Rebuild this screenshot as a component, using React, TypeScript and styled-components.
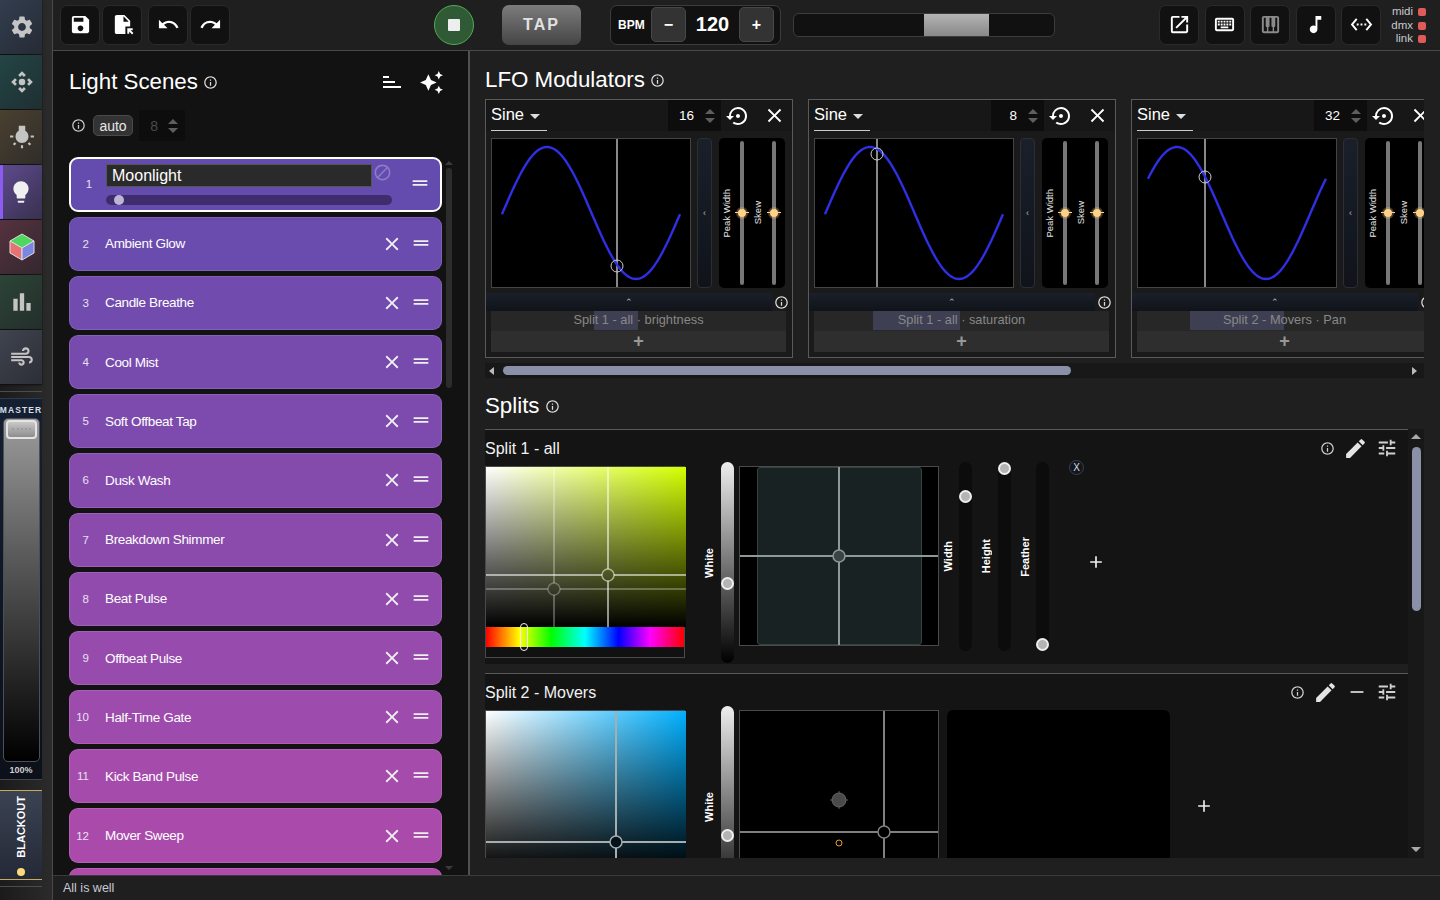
import React from "react";
import styled, { createGlobalStyle } from "styled-components";
import {
  MdAdd,
  MdAir,
  MdAutoAwesome,
  MdBarChart,
  MdBlock,
  MdClose,
  MdControlCamera,
  MdDragHandle,
  MdEdit,
  MdInfoOutline,
  MdLightbulb,
  MdMusicNote,
  MdOpenInNew,
  MdOutlineKeyboard,
  MdOutlineSettingsEthernet,
  MdPiano,
  MdRedo,
  MdRemove,
  MdSave,
  MdSettings,
  MdSettingsBackupRestore,
  MdSort,
  MdTune,
  MdUndo,
  MdWbIncandescent,
  MdFileOpen,
} from "react-icons/md";

const GlobalStyle = createGlobalStyle`
    html, body {
        margin: 0;
        height: 100%;
        overflow: hidden;
        background: #1f1f1f;
    }
    * {
        box-sizing: border-box;
    }
    body {
        font-family: "Liberation Sans", Arial, sans-serif;
        color: #fff;
    }
`;

const Shell = styled.div`
  display: flex;
  width: 1440px;
  height: 900px;
  overflow: hidden;
`;

/* ---------- left rail ---------- */

const Sidebar = styled.div`
  display: flex;
  flex: 0 0 53px;
  border-right: 1px solid #4a4a4a;
  background: linear-gradient(to right, #1b1b1b, #2b2b2b);
`;

const Rail = styled.div`
  display: flex;
  flex-direction: column;
  width: 42px;
`;

const Tab = styled.div<{ $bg: string; $active?: boolean }>`
  display: flex;
  align-items: center;
  justify-content: center;
  height: 54px;
  margin-bottom: 1px;
  padding-left: ${(p) => (p.$active ? "0" : "2px")};
  color: #c4c4c4;
  font-size: 26px;
  background: linear-gradient(135deg, ${(p) => p.$bg}, #1d1f24 170%);
  border-left: ${(p) => (p.$active ? "3px solid #8c5cf0" : "0")};
  box-shadow: 0 1px 2px rgba(0, 0, 0, 0.6);
  svg {
    margin-right: ${(p) => (p.$active ? "4px" : "0")};
  }
`;

const RailRule = styled.div`
  height: 1px;
  margin-top: 6px;
  background: #4c4c4c;
`;

const MasterPanel = styled.div`
  display: flex;
  flex-direction: column;
  align-items: center;
  height: 382px;
  margin-top: 6px;
  border-top: 1px solid #2c3a4a;
  border-bottom: 1px solid #445;
  background: linear-gradient(to bottom, #142032, #0c1019);
`;

const MasterLabel = styled.div`
  height: 19px;
  padding-top: 6px;
  font-size: 8.5px;
  font-weight: 700;
  letter-spacing: 1.1px;
  color: #d8dce2;
`;

const Fader = styled.div`
  position: relative;
  width: 37px;
  height: 344px;
  border: 1px solid #4a4f58;
  border-radius: 5px;
  background: linear-gradient(to bottom, #9c9c9c, #5a5a5a 40%, #000);
`;

const FaderThumb = styled.div`
  position: absolute;
  top: 1px;
  left: 2px;
  width: 31px;
  height: 19px;
  border: 2px solid #e4e4e4;
  border-radius: 4px;
  background: linear-gradient(to bottom, #c8c8c8, #8e8e8e);
  &::after {
    content: "";
    position: absolute;
    top: 6px;
    left: 4px;
    right: 4px;
    border-top: 2px dotted #9a9a9a;
  }
`;

const Percent = styled.div`
  margin-top: 3px;
  font-size: 9px;
  font-weight: 700;
  color: #cfcfcf;
`;

const BlackoutPanel = styled.div`
  display: flex;
  flex-direction: column;
  align-items: center;
  height: 90px;
  margin-top: 10px;
  padding-top: 5px;
  border-top: 1px solid #c9a860;
  border-bottom: 1px solid #c9a860;
  background: linear-gradient(to bottom, #3b4252, #232936);
`;

const BlackoutText = styled.div`
  writing-mode: vertical-rl;
  transform: rotate(180deg);
  font-size: 11px;
  font-weight: 700;
  color: #fff;
`;

const Lamp = styled.div`
  width: 8px;
  height: 8px;
  margin-top: 10px;
  border-radius: 50%;
  background: #ffd97a;
`;

const RailFoot = styled.div`
  height: 1px;
  margin-top: 6px;
  background: #4c4c4c;
`;

/* ---------- top bar ---------- */

const Main = styled.div`
  display: flex;
  flex: 1;
  flex-direction: column;
  min-width: 0;
`;

const TopBar = styled.div`
  display: flex;
  flex: 0 0 51px;
  align-items: center;
  padding: 0 0 1px 7px;
  border-bottom: 1px solid #4a4a4a;
  background: #1f1f1f;
`;

const ToolButton = styled.div<{ $left?: number; $dim?: boolean }>`
  display: flex;
  flex: 0 0 40px;
  align-items: center;
  justify-content: center;
  height: 40px;
  margin-left: ${(p) => p.$left ?? 0}px;
  border: 1px solid #2a2a2a;
  border-radius: 7px;
  background: #111;
  color: ${(p) => (p.$dim ? "#8a8a8a" : "#fff")};
  font-size: 23px;
`;

const StopButton = styled.div`
  display: flex;
  flex: 0 0 40px;
  align-items: center;
  justify-content: center;
  height: 40px;
  margin-left: 204px;
  border: 1.5px solid #4caf50;
  border-radius: 50%;
  background: #2f5a35;
  &::after {
    content: "";
    width: 12px;
    height: 12px;
    border-radius: 1px;
    background: #eee;
  }
`;

const TapButton = styled.div`
  display: flex;
  flex: 0 0 79px;
  align-items: center;
  justify-content: center;
  height: 40px;
  margin-left: 28px;
  border-radius: 7px;
  background: linear-gradient(to bottom, #7c7c7c, #454545);
  font-size: 16px;
  font-weight: 700;
  letter-spacing: 2px;
  color: #e2e2e2;
`;

const BpmBox = styled.div`
  display: flex;
  flex: 0 0 171px;
  align-items: center;
  height: 40px;
  margin-left: 29px;
  padding-left: 7px;
  border: 1px solid #3c3c3c;
  border-radius: 7px;
  background: #111;
`;

const BpmLabel = styled.div`
  width: 33px;
  font-size: 12px;
  font-weight: 700;
`;

const BpmStep = styled.div`
  display: flex;
  flex: 0 0 35px;
  align-items: center;
  justify-content: center;
  height: 35px;
  border: 1px solid #474747;
  border-radius: 5px;
  background: #333;
  font-size: 16px;
  font-weight: 700;
`;

const BpmValue = styled.div`
  flex: 0 0 53px;
  text-align: center;
  font-size: 20px;
  font-weight: 700;
`;

const BeatBar = styled.div`
  display: flex;
  flex: 0 0 262px;
  height: 24px;
  margin-left: 12px;
  padding-left: 130px;
  overflow: hidden;
  border: 1px solid #3c3c3c;
  border-radius: 6px;
  background: #111;
`;

const BeatFill = styled.div`
  width: 65px;
  background: linear-gradient(to bottom, #b4b4b4, #888);
`;

const ToolGroup = styled.div`
  display: flex;
  gap: 5.5px;
  margin-left: 104px;
`;

const Signals = styled.div`
  display: grid;
  grid-template-columns: 32px 8px;
  column-gap: 5px;
  align-items: center;
  justify-items: end;
  margin-top: 2px;
  font-size: 11.5px;
  line-height: 13.5px;
  color: #c8c8d0;
`;

const SignalDot = styled.div`
  width: 8px;
  height: 8px;
  border-radius: 2px;
  background: #e05a5a;
`;

/* ---------- body ---------- */

const Body = styled.div`
  display: flex;
  flex: 1;
  min-height: 0;
`;

const ScenesPanel = styled.div`
  display: flex;
  flex: 0 0 417px;
  flex-direction: column;
  padding-left: 16px;
  border-right: 2px solid #505050;
  background: #121212;
`;

const PanelHead = styled.div`
  display: flex;
  align-items: center;
  height: 30px;
  margin-top: 16px;
`;

const PanelTitle = styled.div`
  font-size: 22.3px;
  color: #fff;
`;

const TitleInfo = styled(MdInfoOutline)`
  margin-left: 5px;
  font-size: 15px;
  color: #ddd;
`;

const SortIcon = styled(MdSort)`
  margin-left: 162px;
  font-size: 24px;
  transform: scaleY(-1);
`;

const SparkIcon = styled(MdAutoAwesome)`
  margin-left: 15px;
  font-size: 25px;
`;

const AutoRow = styled.div`
  display: flex;
  align-items: center;
  height: 31px;
  margin-top: 13px;
  padding-left: 2px;
`;

const AutoChip = styled.div`
  display: flex;
  align-items: center;
  justify-content: center;
  width: 40px;
  height: 21px;
  margin-left: 7px;
  border: 1px solid #4a4a4a;
  border-radius: 5px;
  background: #333;
  font-size: 14px;
  color: #e8e8e8;
`;

const AutoInfo = styled(MdInfoOutline)`
  font-size: 15px;
  color: #ccc;
`;

const Stepper = styled.div<{ $width: number; $left?: number; $muted?: boolean }>`
  display: flex;
  align-items: center;
  justify-content: flex-end;
  gap: 10px;
  flex: 0 0 ${(p) => p.$width}px;
  height: 31px;
  margin-left: ${(p) => p.$left ?? 0}px;
  padding-right: 7px;
  background: #0d0d0d;
  font-size: 14px;
  color: ${(p) => (p.$muted ? "#4a4a4a" : "#fff")};
`;

const Arrows = styled.div`
  display: flex;
  flex-direction: column;
  gap: 4px;
`;

const Caret = styled.div<{ $up?: boolean }>`
  width: 0;
  height: 0;
  border-left: 5px solid transparent;
  border-right: 5px solid transparent;
  border-top: ${(p) => (p.$up ? "0" : "5px solid #5e5e5e")};
  border-bottom: ${(p) => (p.$up ? "5px solid #5e5e5e" : "0")};
`;

const ListWrap = styled.div`
  display: flex;
  flex: 1;
  min-height: 0;
  margin-top: 16px;
`;

const SceneList = styled.div`
  display: flex;
  flex: 0 0 373px;
  flex-direction: column;
  gap: 5px;
  overflow: hidden;
`;

const SceneRow = styled.div<{ $bg: string }>`
  display: flex;
  flex: 0 0 54.2px;
  align-items: center;
  border: 1px solid rgba(255, 255, 255, 0.12);
  border-radius: 9px;
  background: ${(p) => p.$bg};
`;

const ActiveScene = styled.div`
  display: flex;
  flex: 0 0 54.6px;
  border: 2px solid #fff;
  border-radius: 9px;
  background: #644bae;
`;

const SceneNo = styled.div`
  flex: 0 0 35px;
  padding-right: 16px;
  text-align: right;
  font-size: 11.5px;
  color: #e6e0f2;
`;

const ActiveNo = styled.div`
  flex: 0 0 35px;
  align-self: center;
  padding-left: 1px;
  text-align: center;
  font-size: 11.5px;
  color: #e6e0f2;
`;

const SceneName = styled.div`
  flex: 1;
  font-size: 13.5px;
  letter-spacing: -0.35px;
  color: #fff;
`;

const CloseX = styled(MdClose)`
  margin-right: 7px;
  font-size: 22px;
  color: #f0f0f0;
`;

const Handle = styled(MdDragHandle)`
  margin: 0 9px 2px 0;
  font-size: 22px;
  color: #f0f0f0;
`;

const ActiveBody = styled.div`
  display: flex;
  flex-direction: column;
  width: 286px;
  margin-top: 5px;
`;

const NameInput = styled.div`
  display: flex;
  align-items: center;
  width: 266px;
  height: 23px;
  padding-left: 5px;
  border: 1px solid #555;
  background: #2a2a2a;
  font-size: 16px;
  color: #fff;
`;

const SceneTrack = styled.div`
  position: relative;
  height: 10px;
  margin-top: 8px;
  border-radius: 5px;
  background: #3d2d6c;
  &::after {
    content: "";
    position: absolute;
    top: 0;
    left: 8px;
    width: 10px;
    height: 10px;
    border-radius: 50%;
    background: #bdb5d8;
  }
`;

const BlockIcon = styled(MdBlock)`
  position: absolute;
  top: 4px;
  left: 267px;
  font-size: 19px;
  color: #8d7cc9;
`;

const ActiveMiddle = styled.div`
  position: relative;
  display: flex;
  flex: 0 0 286px;
`;

const ActiveHandle = styled(MdDragHandle)`
  align-self: center;
  margin: 0 0 2px 17px;
  font-size: 22px;
  color: #f0f0f0;
`;

const ListScroll = styled.div`
  display: flex;
  flex: 0 0 8px;
  flex-direction: column;
  align-items: center;
  justify-content: space-between;
  margin-left: 3px;
  padding: 4px 0 5px;
`;

const ListThumb = styled.div`
  width: 6px;
  height: 220px;
  margin-top: 3px;
  margin-bottom: auto;
  border-radius: 3px;
  background: #2c2c2c;
`;

const TinyCaret = styled.div<{ $up?: boolean }>`
  width: 0;
  height: 0;
  border-left: 4px solid transparent;
  border-right: 4px solid transparent;
  border-top: ${(p) => (p.$up ? "0" : "4px solid #3a3a3a")};
  border-bottom: ${(p) => (p.$up ? "4px solid #3a3a3a" : "0")};
`;

/* ---------- right side ---------- */

const RightPanel = styled.div`
  display: flex;
  flex: 1;
  flex-direction: column;
  min-width: 0;
  padding-left: 15px;
  background: #1f1f1f;
`;

const RightTitle = styled.div`
  display: flex;
  align-items: center;
  height: 28px;
`;

const LfoTitle = styled(RightTitle)`
  margin-top: 15px;
  margin-bottom: 5px;
`;

const SplitsTitle = styled(RightTitle)`
  margin-top: 14px;
  margin-bottom: 9px;
`;

const LfoStrip = styled.div`
  display: flex;
  gap: 15px;
  width: 939px;
  overflow: hidden;
`;

const LfoCard = styled.div`
  display: flex;
  flex: 0 0 308px;
  flex-direction: column;
  height: 259px;
  border: 1px solid #5a5a5a;
  background: #1a1a1a;
`;

const LfoHead = styled.div`
  display: flex;
  align-items: center;
  height: 31px;
  padding: 0 6px 0 5px;
  background: #171717;
`;

const WaveSelect = styled.div`
  display: flex;
  align-items: center;
  gap: 6px;
  width: 56px;
  height: 31px;
  padding-bottom: 1px;
  border-bottom: 1px solid #ccc;
  font-size: 16.5px;
  &::after {
    content: "";
    margin-top: 4px;
    border-left: 5px solid transparent;
    border-right: 5px solid transparent;
    border-top: 5px solid #ddd;
  }
`;

const LfoStepper = styled(Stepper)`
  margin-left: auto;
  padding-right: 6px;
  color: #fff;
  font-size: 13.5px;
  gap: 11px;
`;

const RestoreIcon = styled(MdSettingsBackupRestore)`
  margin-left: 5px;
  font-size: 24px;
`;

const LfoClose = styled(MdClose)`
  margin-left: 13px;
  font-size: 23px;
`;

const LfoBody = styled.div`
  display: flex;
  height: 150px;
  margin-top: 7px;
  padding-left: 5px;
`;

const WaveCanvas = styled.svg`
  flex: 0 0 200px;
  height: 150px;
  border: 1px solid #444;
  background: #000;
`;

const SideHandle = styled.div`
  display: flex;
  flex: 0 0 15px;
  align-items: center;
  justify-content: center;
  margin-left: 6px;
  border: 1px solid #2a2e36;
  border-radius: 4px;
  background: linear-gradient(to bottom, #1a1f2a, #10131a);
  font-size: 9px;
  color: #bbb;
`;

const ParamPanel = styled.div`
  display: grid;
  flex: 0 0 66px;
  grid-template-columns: 16px 14px 18px 14px;
  margin-left: 7px;
  padding: 3px 0;
  border-radius: 5px;
  background: #000;
`;

const ParamLabel = styled.div`
  display: flex;
  align-items: center;
  justify-content: center;
  padding-right: 2px;
  font-size: 9.5px;
  color: #e4e4e4;
  span {
    writing-mode: vertical-rl;
    transform: rotate(180deg);
    white-space: nowrap;
  }
`;

const ParamTrack = styled.div`
  position: relative;
  justify-self: center;
  width: 4px;
  border-radius: 2px;
  background: #777;
  &::before {
    content: "";
    position: absolute;
    top: 71px;
    left: -5px;
    width: 14px;
    height: 1px;
    background: #ffd288;
  }
  &::after {
    content: "";
    position: absolute;
    top: 68px;
    left: -2px;
    width: 8px;
    height: 8px;
    border-radius: 50%;
    background: #ffd288;
    box-shadow: 0 0 0 2px rgba(255, 210, 136, 0.28);
  }
`;

const CollapseRow = styled.div`
  display: flex;
  align-items: center;
  height: 18px;
  margin-top: 5px;
`;

const CollapseBar = styled.div`
  display: flex;
  flex: 0 0 286px;
  align-items: center;
  justify-content: center;
  height: 18px;
  background: linear-gradient(to bottom, #1a1f2a, #101319);
  font-size: 9px;
  color: #bbb;
`;

const CollapseInfo = styled(MdInfoOutline)`
  margin-left: 2px;
  font-size: 15px;
  color: #ddd;
`;

const TargetRow = styled.div`
  position: relative;
  height: 20px;
  margin: 0 6px 0 5px;
  background: #272727;
  text-align: center;
  font-size: 12.8px;
  line-height: 17px;
  color: #888;
  white-space: nowrap;
`;

const TargetMark = styled.div<{ $left: number; $width: number }>`
  position: absolute;
  top: 0;
  left: ${(p) => p.$left}px;
  width: ${(p) => p.$width}px;
  height: 19px;
  background: rgba(110, 110, 170, 0.35);
`;

const TargetText = styled.span`
  position: relative;
`;

const AddRow = styled.div`
  height: 21px;
  margin: 0 6px 5px 5px;
  background: #2e2e2e;
  text-align: center;
  color: #999;
  font-size: 18px;
  font-weight: 700;
  line-height: 21px;
`;

const HScroll = styled.div`
  display: flex;
  align-items: center;
  justify-content: space-between;
  width: 939px;
  height: 15px;
  margin-top: 5px;
  padding: 0 7px 0 4px;
  background: #181818;
`;

const HThumb = styled.div`
  width: 568px;
  height: 9px;
  margin-left: 9px;
  margin-right: auto;
  border-radius: 5px;
  background: #8a90a8;
`;

const SideCaret = styled.div<{ $left?: boolean }>`
  width: 0;
  height: 0;
  border-top: 4px solid transparent;
  border-bottom: 4px solid transparent;
  border-right: ${(p) => (p.$left ? "5px solid #bbb" : "0")};
  border-left: ${(p) => (p.$left ? "0" : "5px solid #bbb")};
`;

const SplitsFrame = styled.div`
  display: flex;
  width: 939px;
  height: 429px;
  overflow: hidden;
`;

const SplitsColumn = styled.div`
  display: flex;
  flex: 0 0 923px;
  flex-direction: column;
  overflow: hidden;
`;

const SplitSection = styled.div<{ $height: number }>`
  flex: 0 0 ${(p) => p.$height}px;
  border-top: 1px solid #5a5a5a;
  background: #141414;
`;

const SplitGap = styled.div`
  flex: 0 0 9px;
  background: #1f1f1f;
`;

const SplitHead = styled.div`
  display: flex;
  align-items: center;
  height: 36px;
  padding-right: 6px;
  font-size: 16px;
  color: #f2f2f2;
`;

const SplitName = styled.div`
  margin-right: auto;
  padding-top: 1px;
`;

const HeadSlot = styled.div`
  display: flex;
  flex: 0 0 30px;
  align-items: center;
  justify-content: center;
  color: #d0d0d0;
  font-size: 22px;
`;

const SmallInfo = styled(MdInfoOutline)`
  font-size: 15px;
`;

const Pencil = styled(MdEdit)`
  margin-right: 4px;
  font-size: 25px;
  color: #e4e4e4;
`;

const Controls = styled.div`
  display: flex;
  align-items: flex-start;
`;

const Picker = styled.div`
  position: relative;
  flex: 0 0 200px;
  min-width: 0;
  height: 192px;
  border: 1px solid #4a4a4a;
  background: #111;
`;

const SvField = styled.div<{ $hue: string }>`
  position: relative;
  width: 200px;
  height: 160px;
  background: linear-gradient(to top, #000, transparent),
    linear-gradient(to right, #fff, ${(p) => p.$hue});
`;

const Overlay = styled.svg`
  position: absolute;
  top: 0;
  left: 0;
  width: 100%;
  height: 100%;
`;

const HueStrip = styled.div`
  position: relative;
  width: 198px;
  height: 20px;
  background: linear-gradient(
    to right,
    #f00 0%,
    #ff0 17%,
    #0f0 33%,
    #0ff 50%,
    #00f 67%,
    #f0f 83%,
    #f00 100%
  );
`;

const HueThumb = styled.div`
  position: absolute;
  top: -4px;
  left: 34px;
  width: 8px;
  height: 28px;
  border: 1px solid #eee;
  border-radius: 4px;
`;

const SliderGroup = styled.div<{ $left: number; $height: number; $gap: number }>`
  display: flex;
  align-items: center;
  gap: ${(p) => p.$gap}px;
  height: ${(p) => p.$height}px;
  margin-top: -4px;
  margin-left: ${(p) => p.$left}px;
`;

const VLabel = styled.div`
  flex: 0 0 12px;
  writing-mode: vertical-rl;
  transform: rotate(180deg);
  text-align: center;
  font-size: 11px;
  font-weight: 700;
  line-height: 12px;
  white-space: nowrap;
  color: #fff;
`;

const WhiteTrack = styled.div`
  position: relative;
  flex: 0 0 13px;
  height: 100%;
  border-radius: 7px;
  background: linear-gradient(to bottom, #eee, #000);
`;

const DarkTrack = styled.div`
  position: relative;
  flex: 0 0 13px;
  height: 100%;
  border-radius: 7px;
  background: #0c0c0c;
`;

const Knob = styled.div<{ $top: number }>`
  position: absolute;
  top: ${(p) => p.$top}px;
  left: 0;
  width: 13px;
  height: 13px;
  border: 2px solid #eee;
  border-radius: 50%;
  background: #b4b4b4;
`;

const XyPad = styled.div<{ $left: number }>`
  position: relative;
  flex: 0 0 200px;
  height: 180px;
  margin-left: ${(p) => p.$left}px;
  border: 1px solid #4a4a4a;
  background: #000;
`;

const XyZone = styled.div`
  position: absolute;
  top: 0;
  left: 17px;
  width: 165px;
  height: 178px;
  border: 1px solid #34423f;
  border-radius: 3px;
  background: #182222;
`;

const RemoveDot = styled.div`
  display: flex;
  flex: 0 0 15px;
  align-items: center;
  justify-content: center;
  height: 15px;
  margin: -6px 0 0 20px;
  border: 1px solid #39404c;
  border-radius: 50%;
  background: #12161e;
  font-size: 10px;
  color: #ddd;
`;

const PlusIcon = styled(MdAdd)<{ $left: number; $top: number }>`
  flex: 0 0 20px;
  margin-top: ${(p) => p.$top}px;
  margin-left: ${(p) => p.$left}px;
  font-size: 20px;
  color: #eee;
`;

const BlackPanel = styled.div`
  flex: 0 0 223px;
  height: 180px;
  margin-left: 8px;
  border-radius: 6px;
  background: #000;
`;

const VScroll = styled.div`
  display: flex;
  flex: 0 0 16px;
  flex-direction: column;
  align-items: center;
  padding: 5px 0 6px;
  background: #181818;
`;

const VThumb = styled.div`
  width: 9px;
  height: 164px;
  margin-top: 8px;
  margin-bottom: auto;
  border-radius: 5px;
  background: #8a90a8;
`;

const VCaret = styled.div<{ $up?: boolean }>`
  width: 0;
  height: 0;
  border-left: 5px solid transparent;
  border-right: 5px solid transparent;
  border-top: ${(p) => (p.$up ? "0" : "5px solid #aaa")};
  border-bottom: ${(p) => (p.$up ? "5px solid #aaa" : "0")};
`;

const StatusBar = styled.div`
  display: flex;
  flex: 0 0 25px;
  align-items: center;
  padding-left: 10px;
  border-top: 1px solid #3a3a3a;
  background: #1f1f1f;
  font-size: 12.5px;
  color: #c9c9d6;
`;

/* ---------- drawings ---------- */

const CubeIcon = () => (
  <svg width="26" height="28" viewBox="0 0 26 28">
    <polygon points="13,1 25,8 13,15 1,8" fill="#4fd65e" stroke="#ddd" strokeWidth="1" />
    <polygon points="1,8 13,15 13,27 1,20" fill="#e57373" stroke="#ddd" strokeWidth="1" />
    <polygon points="25,8 13,15 13,27 25,20" fill="#7a86e0" stroke="#ddd" strokeWidth="1" />
  </svg>
);

const wavePath = (peak: number): string => {
  const pts: string[] = [];
  for (let x = 10; x <= 188; x += 2) {
    const y = 74 - 66 * Math.cos(((x - peak) / 178) * 2 * Math.PI);
    pts.push(`${x},${y.toFixed(1)}`);
  }
  return "M" + pts.join("L");
};

interface WaveProps {
  peak: number;
  headX: number;
  headY: number;
}

const Wave = ({ peak, headX, headY }: WaveProps) => (
  <WaveCanvas viewBox="0 0 198 148">
    <line x1={headX} y1="0" x2={headX} y2="148" stroke="#888" strokeWidth="2" />
    <path d={wavePath(peak)} fill="none" stroke="#2f2fe6" strokeWidth="2.4" />
    <circle cx={headX} cy={headY} r="6" fill="none" stroke="#ccc" strokeWidth="1" />
  </WaveCanvas>
);

interface CrossProps {
  x: number;
  y: number;
  color: string;
  fill?: string;
}

const Cross = ({ x, y, color, fill = "none" }: CrossProps) => (
  <Overlay>
    <line x1={x} y1="0" x2={x} y2={y - 6} stroke={color} strokeWidth="2" />
    <line x1={x} y1={y + 6} x2={x} y2="1000" stroke={color} strokeWidth="2" />
    <line x1="0" y1={y} x2={x - 6} y2={y} stroke={color} strokeWidth="2" />
    <line x1={x + 6} y1={y} x2="1000" y2={y} stroke={color} strokeWidth="2" />
    <circle cx={x} cy={y} r="6" fill={fill} stroke={color} strokeWidth="1.5" />
  </Overlay>
);

/* ---------- data ---------- */

const scenes = [
  "Ambient Glow",
  "Candle Breathe",
  "Cool Mist",
  "Soft Offbeat Tap",
  "Dusk Wash",
  "Breakdown Shimmer",
  "Beat Pulse",
  "Offbeat Pulse",
  "Half-Time Gate",
  "Kick Band Pulse",
  "Mover Sweep",
];

const sceneColor = (i: number): string => {
  const t = i / 11;
  const r = Math.round(0x64 + (0xaa - 0x64) * t);
  return `rgb(${r},75,${Math.round(174 - 2 * t)})`;
};

interface LfoProps {
  count: number;
  peak: number;
  headX: number;
  headY: number;
  target: string;
  markLeft: number;
  markWidth: number;
}

const lfos: LfoProps[] = [
  { count: 16, peak: 55, headX: 125, headY: 127, target: "Split 1 - all · brightness", markLeft: 103, markWidth: 44 },
  { count: 8, peak: 55, headX: 62, headY: 15, target: "Split 1 - all · saturation", markLeft: 59, markWidth: 87 },
  { count: 32, peak: 39, headX: 67, headY: 38, target: "Split 2 - Movers · Pan", markLeft: 53, markWidth: 94 },
];

const Lfo = ({ count, peak, headX, headY, target, markLeft, markWidth }: LfoProps) => (
  <LfoCard>
    <LfoHead>
      <WaveSelect>Sine</WaveSelect>
      <LfoStepper $width={53}>
        {count}
        <Arrows>
          <Caret $up />
          <Caret />
        </Arrows>
      </LfoStepper>
      <RestoreIcon />
      <LfoClose />
    </LfoHead>
    <LfoBody>
      <Wave peak={peak} headX={headX} headY={headY} />
      <SideHandle>‹</SideHandle>
      <ParamPanel>
        <ParamLabel>
          <span>Peak Width</span>
        </ParamLabel>
        <ParamTrack />
        <ParamLabel>
          <span>Skew</span>
        </ParamLabel>
        <ParamTrack />
      </ParamPanel>
    </LfoBody>
    <CollapseRow>
      <CollapseBar>⌃</CollapseBar>
      <CollapseInfo />
    </CollapseRow>
    <TargetRow>
      <TargetMark $left={markLeft} $width={markWidth} />
      <TargetText>{target}</TargetText>
    </TargetRow>
    <AddRow>+</AddRow>
  </LfoCard>
);

const App = () => (
  <Shell>
    <GlobalStyle />
    <Sidebar>
      <Rail>
        <Tab $bg="#323d4e">
          <MdSettings />
        </Tab>
        <Tab $bg="#234545">
          <MdControlCamera />
        </Tab>
        <Tab $bg="#4a4030">
          <MdWbIncandescent />
        </Tab>
        <Tab $bg="#5e4a8c" $active>
          <MdLightbulb color="#f0f0f0" />
        </Tab>
        <Tab $bg="#55323e">
          <CubeIcon />
        </Tab>
        <Tab $bg="#2c4436">
          <MdBarChart />
        </Tab>
        <Tab $bg="#40444f">
          <MdAir />
        </Tab>
        <RailRule />
        <MasterPanel>
          <MasterLabel>MASTER</MasterLabel>
          <Fader>
            <FaderThumb />
          </Fader>
          <Percent>100%</Percent>
        </MasterPanel>
        <BlackoutPanel>
          <BlackoutText>BLACKOUT</BlackoutText>
          <Lamp />
        </BlackoutPanel>
        <RailFoot />
      </Rail>
    </Sidebar>
    <Main>
      <TopBar>
        <ToolButton>
          <MdSave />
        </ToolButton>
        <ToolButton $left={2}>
          <MdFileOpen />
        </ToolButton>
        <ToolButton $left={6}>
          <MdUndo />
        </ToolButton>
        <ToolButton $left={2}>
          <MdRedo />
        </ToolButton>
        <StopButton />
        <TapButton>TAP</TapButton>
        <BpmBox>
          <BpmLabel>BPM</BpmLabel>
          <BpmStep>−</BpmStep>
          <BpmValue>120</BpmValue>
          <BpmStep>+</BpmStep>
        </BpmBox>
        <BeatBar>
          <BeatFill />
        </BeatBar>
        <ToolGroup>
          <ToolButton>
            <MdOpenInNew />
          </ToolButton>
          <ToolButton>
            <MdOutlineKeyboard />
          </ToolButton>
          <ToolButton $dim>
            <MdPiano />
          </ToolButton>
          <ToolButton>
            <MdMusicNote />
          </ToolButton>
          <ToolButton>
            <MdOutlineSettingsEthernet />
          </ToolButton>
        </ToolGroup>
        <Signals>
          <span>midi</span>
          <SignalDot />
          <span>dmx</span>
          <SignalDot />
          <span>link</span>
          <SignalDot />
        </Signals>
      </TopBar>
      <Body>
        <ScenesPanel>
          <PanelHead>
            <PanelTitle>Light Scenes</PanelTitle>
            <TitleInfo />
            <SortIcon />
            <SparkIcon />
          </PanelHead>
          <AutoRow>
            <AutoInfo />
            <AutoChip>auto</AutoChip>
            <Stepper $width={46} $left={6} $muted>
              8
              <Arrows>
                <Caret $up />
                <Caret />
              </Arrows>
            </Stepper>
          </AutoRow>
          <ListWrap>
            <SceneList>
              <ActiveScene>
                <ActiveNo>1</ActiveNo>
                <ActiveMiddle>
                  <ActiveBody>
                    <NameInput>Moonlight</NameInput>
                    <SceneTrack />
                  </ActiveBody>
                  <BlockIcon />
                </ActiveMiddle>
                <ActiveHandle />
              </ActiveScene>
              {scenes.map((name, i) => (
                <SceneRow key={name} $bg={sceneColor(i + 1)}>
                  <SceneNo>{i + 2}</SceneNo>
                  <SceneName>{name}</SceneName>
                  <CloseX />
                  <Handle />
                </SceneRow>
              ))}
              <SceneRow $bg={sceneColor(12)} />
            </SceneList>
            <ListScroll>
              <TinyCaret $up />
              <ListThumb />
              <TinyCaret />
            </ListScroll>
          </ListWrap>
        </ScenesPanel>
        <RightPanel>
          <LfoTitle>
            <PanelTitle>LFO Modulators</PanelTitle>
            <TitleInfo />
          </LfoTitle>
          <LfoStrip>
            {lfos.map((l) => (
              <Lfo key={l.count} {...l} />
            ))}
          </LfoStrip>
          <HScroll>
            <SideCaret $left />
            <HThumb />
            <SideCaret />
          </HScroll>
          <SplitsTitle>
            <PanelTitle>Splits</PanelTitle>
            <TitleInfo />
          </SplitsTitle>
          <SplitsFrame>
            <SplitsColumn>
              <SplitSection $height={235}>
                <SplitHead>
                  <SplitName>Split 1 - all</SplitName>
                  <HeadSlot>
                    <SmallInfo />
                  </HeadSlot>
                  <HeadSlot>
                    <Pencil />
                  </HeadSlot>
                  <HeadSlot>
                    <MdTune />
                  </HeadSlot>
                </SplitHead>
                <Controls>
                  <Picker>
                    <SvField $hue="#d4ff00">
                      <Cross x={68} y={122} color="rgba(255,255,255,0.28)" />
                      <Cross x={122} y={108} color="rgba(255,255,255,0.55)" />
                    </SvField>
                    <HueStrip>
                      <HueThumb />
                    </HueStrip>
                  </Picker>
                  <SliderGroup $left={18} $height={201} $gap={6}>
                    <VLabel>White</VLabel>
                    <WhiteTrack>
                      <Knob $top={115} />
                    </WhiteTrack>
                  </SliderGroup>
                  <XyPad $left={5}>
                    <XyZone />
                    <Cross x={99} y={89} color="#8b9a96" fill="#3a4444" />
                  </XyPad>
                  <SliderGroup $left={3} $height={189} $gap={5}>
                    <VLabel>Width</VLabel>
                    <DarkTrack>
                      <Knob $top={28} />
                    </DarkTrack>
                  </SliderGroup>
                  <SliderGroup $left={8} $height={189} $gap={6}>
                    <VLabel>Height</VLabel>
                    <DarkTrack>
                      <Knob $top={0} />
                    </DarkTrack>
                  </SliderGroup>
                  <SliderGroup $left={8} $height={189} $gap={5}>
                    <VLabel>Feather</VLabel>
                    <DarkTrack>
                      <Knob $top={176} />
                    </DarkTrack>
                  </SliderGroup>
                  <RemoveDot>X</RemoveDot>
                  <PlusIcon $left={2} $top={86} />
                </Controls>
              </SplitSection>
              <SplitGap />
              <SplitSection $height={240}>
                <SplitHead>
                  <SplitName>Split 2 - Movers</SplitName>
                  <HeadSlot>
                    <SmallInfo />
                  </HeadSlot>
                  <HeadSlot>
                    <Pencil />
                  </HeadSlot>
                  <HeadSlot>
                    <MdRemove />
                  </HeadSlot>
                  <HeadSlot>
                    <MdTune />
                  </HeadSlot>
                </SplitHead>
                <Controls>
                  <Picker>
                    <SvField $hue="#00b0ff">
                      <Cross x={130} y={131} color="#a8adb0" fill="#02121a" />
                    </SvField>
                    <HueStrip />
                  </Picker>
                  <SliderGroup $left={18} $height={201} $gap={6}>
                    <VLabel>White</VLabel>
                    <WhiteTrack>
                      <Knob $top={123} />
                    </WhiteTrack>
                  </SliderGroup>
                  <XyPad $left={5}>
                    <Overlay>
                      <line x1="99" y1="80" x2="99" y2="98" stroke="#555" />
                      <line x1="90" y1="89" x2="108" y2="89" stroke="#555" />
                      <circle cx="99" cy="89" r="7" fill="#4a4a4a" stroke="#666" />
                      <circle cx="99" cy="132" r="3" fill="none" stroke="#e0a030" />
                    </Overlay>
                    <Cross x={144} y={121} color="#808080" fill="#000" />
                  </XyPad>
                  <BlackPanel />
                  <PlusIcon $left={24} $top={86} />
                </Controls>
              </SplitSection>
            </SplitsColumn>
            <VScroll>
              <VCaret $up />
              <VThumb />
              <VCaret />
            </VScroll>
          </SplitsFrame>
        </RightPanel>
      </Body>
      <StatusBar>All is well</StatusBar>
    </Main>
  </Shell>
);

export default App;
